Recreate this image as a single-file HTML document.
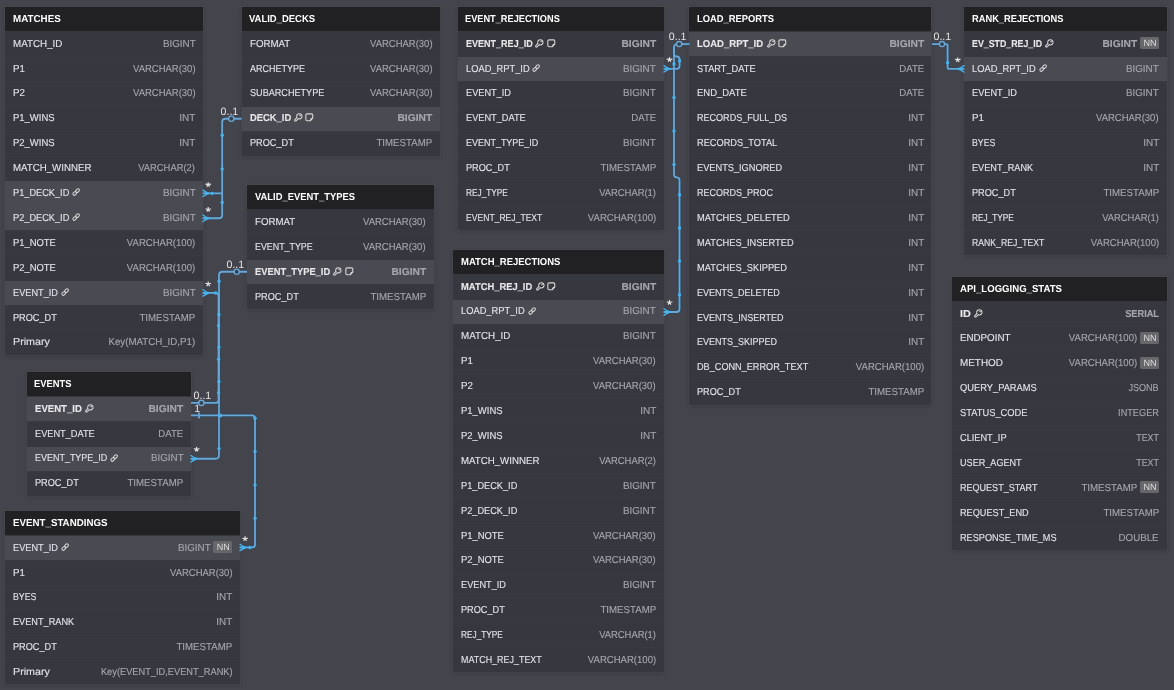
<!DOCTYPE html><html><head><meta charset="utf-8"><style>
*{box-sizing:border-box}
html,body{margin:0;padding:0}
body{width:1174px;height:690px;overflow:hidden;position:relative;background:#44444d;font-family:"Liberation Sans",sans-serif;text-rendering:geometricPrecision}
#w{position:absolute;left:0;top:0;width:1174px;height:690px;will-change:transform}
.t{position:absolute;background:#37373f;box-shadow:0 0 0 1px rgba(255,255,255,0.03),0 1px 4px rgba(0,0,0,0.22)}
.h{position:absolute;left:0;right:0;top:0;height:24.0px;background:#212123}
.r{position:absolute;left:0;right:0;height:24.9px;box-shadow:inset 0 1px 0 #3a3a43}
.r.f{box-shadow:none}
.r.hl{box-shadow:none}
.hlb{position:absolute;left:0;right:0;background:#4a4a52}
.x{position:absolute;top:1.65px;white-space:nowrap;font-size:10.1px;line-height:24.9px}
.hx{position:absolute;top:1px;white-space:nowrap;font-size:10.1px;line-height:24.0px;color:#fff;font-weight:bold;transform-origin:0 50%}
.n{color:#e2e2ea;transform-origin:0 50%;-webkit-text-stroke:0.12px #e2e2ea}
.ty{color:#a6a6ae;transform-origin:100% 50%;-webkit-text-stroke:0.12px #a6a6ae}
.b{font-weight:bold}
.n.b{color:#e8e8e8}
.ic{position:absolute;color:#d8d8d8}
.nn{position:absolute;background:#67676b;border-radius:1.5px}
.nnt{position:absolute;color:#dcdcdc;font-size:9px;white-space:nowrap;transform-origin:0 0}
svg.lines{position:absolute;left:0;top:0}
.lab{position:absolute;color:#e4e4e4;font-size:10.6px;line-height:12px;white-space:nowrap}
</style></head><body><div id="w"><div class="t" style="left:5px;top:7px;width:198.00px;height:347.70px"><div class="h"><span class="hx" style="left:7.5px;transform:scaleX(0.9702)">MATCHES</span></div><div class="r f" style="top:24.00px"><span class="x n" style="left:8.1px;transform:scaleX(0.9713)">MATCH_ID</span><span class="x ty" style="right:7.70px;transform:scaleX(0.9706)">BIGINT</span></div><div class="r" style="top:48.90px"><span class="x n" style="left:8.1px;transform:scaleX(0.9593)">P1</span><span class="x ty" style="right:7.70px;transform:scaleX(0.9397)">VARCHAR(30)</span></div><div class="r" style="top:73.80px"><span class="x n" style="left:8.1px;transform:scaleX(0.9593)">P2</span><span class="x ty" style="right:7.70px;transform:scaleX(0.9397)">VARCHAR(30)</span></div><div class="r" style="top:98.70px"><span class="x n" style="left:8.1px;transform:scaleX(0.9374)">P1_WINS</span><span class="x ty" style="right:7.70px;transform:scaleX(0.9827)">INT</span></div><div class="r" style="top:123.60px"><span class="x n" style="left:8.1px;transform:scaleX(0.9374)">P2_WINS</span><span class="x ty" style="right:7.70px;transform:scaleX(0.9827)">INT</span></div><div class="r" style="top:148.50px"><span class="x n" style="left:8.1px;transform:scaleX(0.9601)">MATCH_WINNER</span><span class="x ty" style="right:7.70px;transform:scaleX(0.9315)">VARCHAR(2)</span></div><div class="hlb" style="top:174.20px;height:24.90px"></div><div class="r hl" style="top:173.40px"><span class="x n" style="left:8.1px;transform:scaleX(0.9123)">P1_DECK_ID</span><span class="ic" style="left:67.43px;top:8.00px"><svg width="9" height="9" viewBox="0 0 9 9" style="display:block;overflow:visible"><g fill="none" stroke="currentColor" stroke-width="1.05"><rect x="-2.05" y="-1.35" width="4.1" height="2.7" rx="1.35" transform="translate(5.55 2.65) rotate(-45)"/><rect x="-2.05" y="-1.35" width="4.1" height="2.7" rx="1.35" transform="translate(2.75 5.45) rotate(-45)"/></g></svg></span><span class="x ty" style="right:7.70px;transform:scaleX(0.9706)">BIGINT</span></div><div class="hlb" style="top:199.10px;height:24.90px"></div><div class="r hl" style="top:198.30px"><span class="x n" style="left:8.1px;transform:scaleX(0.9123)">P2_DECK_ID</span><span class="ic" style="left:67.43px;top:8.00px"><svg width="9" height="9" viewBox="0 0 9 9" style="display:block;overflow:visible"><g fill="none" stroke="currentColor" stroke-width="1.05"><rect x="-2.05" y="-1.35" width="4.1" height="2.7" rx="1.35" transform="translate(5.55 2.65) rotate(-45)"/><rect x="-2.05" y="-1.35" width="4.1" height="2.7" rx="1.35" transform="translate(2.75 5.45) rotate(-45)"/></g></svg></span><span class="x ty" style="right:7.70px;transform:scaleX(0.9706)">BIGINT</span></div><div class="r" style="top:223.20px"><span class="x n" style="left:8.1px;transform:scaleX(0.9323)">P1_NOTE</span><span class="x ty" style="right:7.70px;transform:scaleX(0.9465)">VARCHAR(100)</span></div><div class="r" style="top:248.10px"><span class="x n" style="left:8.1px;transform:scaleX(0.9323)">P2_NOTE</span><span class="x ty" style="right:7.70px;transform:scaleX(0.9465)">VARCHAR(100)</span></div><div class="hlb" style="top:273.80px;height:24.90px"></div><div class="r hl" style="top:273.00px"><span class="x n" style="left:8.1px;transform:scaleX(0.9109)">EVENT_ID</span><span class="ic" style="left:56.09px;top:8.00px"><svg width="9" height="9" viewBox="0 0 9 9" style="display:block;overflow:visible"><g fill="none" stroke="currentColor" stroke-width="1.05"><rect x="-2.05" y="-1.35" width="4.1" height="2.7" rx="1.35" transform="translate(5.55 2.65) rotate(-45)"/><rect x="-2.05" y="-1.35" width="4.1" height="2.7" rx="1.35" transform="translate(2.75 5.45) rotate(-45)"/></g></svg></span><span class="x ty" style="right:7.70px;transform:scaleX(0.9706)">BIGINT</span></div><div class="r" style="top:297.90px"><span class="x n" style="left:8.1px;transform:scaleX(0.9084)">PROC_DT</span><span class="x ty" style="right:7.70px;transform:scaleX(0.9580)">TIMESTAMP</span></div><div class="r" style="top:322.80px"><span class="x n" style="left:8.1px;transform:scaleX(1.0608)">Primary</span><span class="x ty" style="right:7.70px;transform:scaleX(0.9621)">Key(MATCH_ID,P1)</span></div></div><div class="t" style="left:241.5px;top:7px;width:198.50px;height:148.50px"><div class="h"><span class="hx" style="left:7.5px;transform:scaleX(0.9366)">VALID_DECKS</span></div><div class="r f" style="top:24.00px"><span class="x n" style="left:8.1px;transform:scaleX(0.9629)">FORMAT</span><span class="x ty" style="right:7.70px;transform:scaleX(0.9397)">VARCHAR(30)</span></div><div class="r" style="top:48.90px"><span class="x n" style="left:8.1px;transform:scaleX(0.8899)">ARCHETYPE</span><span class="x ty" style="right:7.70px;transform:scaleX(0.9397)">VARCHAR(30)</span></div><div class="r" style="top:73.80px"><span class="x n" style="left:8.1px;transform:scaleX(0.9014)">SUBARCHETYPE</span><span class="x ty" style="right:7.70px;transform:scaleX(0.9397)">VARCHAR(30)</span></div><div class="hlb" style="top:99.50px;height:24.90px"></div><div class="r hl" style="top:98.70px"><span class="x n b" style="left:8.1px;transform:scaleX(0.9304)">DECK_ID</span><span class="ic" style="left:52.35px;top:7.70px"><svg width="9" height="9" viewBox="0 0 9 9" style="display:block;overflow:visible"><defs><mask id="km1" maskUnits="userSpaceOnUse" x="-2" y="-2" width="13" height="13"><g fill="#fff" stroke="#fff" stroke-width="2.1" stroke-linejoin="round"><circle cx="5.35" cy="3.35" r="2.1"/><rect x="0" y="-0.35" width="5.9" height="0.7" rx="0.35" transform="translate(5.4 3.3) rotate(135)"/></g><g fill="#000"><circle cx="5.35" cy="3.35" r="2.1"/><rect x="0" y="-0.35" width="5.9" height="0.7" rx="0.35" transform="translate(5.4 3.3) rotate(135)"/></g></mask></defs><rect x="-2" y="-2" width="13" height="13" fill="currentColor" mask="url(#km1)"/><circle cx="6.1" cy="2.6" r="0.8" fill="currentColor"/></svg></span><span class="ic" style="left:63.55px;top:7.75px"><svg width="9" height="9" viewBox="0 0 9 9" style="display:block;overflow:visible"><g fill="none" stroke="currentColor" stroke-width="1.1"><path d="M2.05 0.85 H6.55 A1.2 1.2 0 0 1 7.75 2.05 V5.1 L5.35 7.75 H2.05 A1.2 1.2 0 0 1 0.85 6.55 V2.05 A1.2 1.2 0 0 1 2.05 0.85 Z"/><path d="M7.7 5.15 Q5.7 5.3 5.4 7.7"/></g></svg></span><span class="x ty b" style="right:7.70px;transform:scaleX(1.0182)">BIGINT</span></div><div class="r" style="top:123.60px"><span class="x n" style="left:8.1px;transform:scaleX(0.9084)">PROC_DT</span><span class="x ty" style="right:7.70px;transform:scaleX(0.9580)">TIMESTAMP</span></div></div><div class="t" style="left:247px;top:185.2px;width:186.70px;height:123.60px"><div class="h"><span class="hx" style="left:7.5px;transform:scaleX(0.9297)">VALID_EVENT_TYPES</span></div><div class="r f" style="top:24.00px"><span class="x n" style="left:8.1px;transform:scaleX(0.9629)">FORMAT</span><span class="x ty" style="right:7.70px;transform:scaleX(0.9397)">VARCHAR(30)</span></div><div class="r" style="top:48.90px"><span class="x n" style="left:8.1px;transform:scaleX(0.8792)">EVENT_TYPE</span><span class="x ty" style="right:7.70px;transform:scaleX(0.9397)">VARCHAR(30)</span></div><div class="hlb" style="top:74.60px;height:24.90px"></div><div class="r hl" style="top:73.80px"><span class="x n b" style="left:8.1px;transform:scaleX(0.9241)">EVENT_TYPE_ID</span><span class="ic" style="left:86.31px;top:7.70px"><svg width="9" height="9" viewBox="0 0 9 9" style="display:block;overflow:visible"><defs><mask id="km2" maskUnits="userSpaceOnUse" x="-2" y="-2" width="13" height="13"><g fill="#fff" stroke="#fff" stroke-width="2.1" stroke-linejoin="round"><circle cx="5.35" cy="3.35" r="2.1"/><rect x="0" y="-0.35" width="5.9" height="0.7" rx="0.35" transform="translate(5.4 3.3) rotate(135)"/></g><g fill="#000"><circle cx="5.35" cy="3.35" r="2.1"/><rect x="0" y="-0.35" width="5.9" height="0.7" rx="0.35" transform="translate(5.4 3.3) rotate(135)"/></g></mask></defs><rect x="-2" y="-2" width="13" height="13" fill="currentColor" mask="url(#km2)"/><circle cx="6.1" cy="2.6" r="0.8" fill="currentColor"/></svg></span><span class="ic" style="left:97.51px;top:7.75px"><svg width="9" height="9" viewBox="0 0 9 9" style="display:block;overflow:visible"><g fill="none" stroke="currentColor" stroke-width="1.1"><path d="M2.05 0.85 H6.55 A1.2 1.2 0 0 1 7.75 2.05 V5.1 L5.35 7.75 H2.05 A1.2 1.2 0 0 1 0.85 6.55 V2.05 A1.2 1.2 0 0 1 2.05 0.85 Z"/><path d="M7.7 5.15 Q5.7 5.3 5.4 7.7"/></g></svg></span><span class="x ty b" style="right:7.70px;transform:scaleX(1.0182)">BIGINT</span></div><div class="r" style="top:98.70px"><span class="x n" style="left:8.1px;transform:scaleX(0.9084)">PROC_DT</span><span class="x ty" style="right:7.70px;transform:scaleX(0.9580)">TIMESTAMP</span></div></div><div class="t" style="left:26.6px;top:372.0px;width:164.70px;height:123.60px"><div class="h"><span class="hx" style="left:7.5px;transform:scaleX(0.9280)">EVENTS</span></div><div class="hlb" style="top:24.80px;height:24.90px"></div><div class="r f hl" style="top:24.00px"><span class="x n b" style="left:8.1px;transform:scaleX(0.9498)">EVENT_ID</span><span class="ic" style="left:58.01px;top:7.70px"><svg width="9" height="9" viewBox="0 0 9 9" style="display:block;overflow:visible"><defs><mask id="km3" maskUnits="userSpaceOnUse" x="-2" y="-2" width="13" height="13"><g fill="#fff" stroke="#fff" stroke-width="2.1" stroke-linejoin="round"><circle cx="5.35" cy="3.35" r="2.1"/><rect x="0" y="-0.35" width="5.9" height="0.7" rx="0.35" transform="translate(5.4 3.3) rotate(135)"/></g><g fill="#000"><circle cx="5.35" cy="3.35" r="2.1"/><rect x="0" y="-0.35" width="5.9" height="0.7" rx="0.35" transform="translate(5.4 3.3) rotate(135)"/></g></mask></defs><rect x="-2" y="-2" width="13" height="13" fill="currentColor" mask="url(#km3)"/><circle cx="6.1" cy="2.6" r="0.8" fill="currentColor"/></svg></span><span class="x ty b" style="right:7.70px;transform:scaleX(1.0182)">BIGINT</span></div><div class="r" style="top:48.90px"><span class="x n" style="left:8.1px;transform:scaleX(0.9122)">EVENT_DATE</span><span class="x ty" style="right:7.70px;transform:scaleX(0.9505)">DATE</span></div><div class="hlb" style="top:74.60px;height:24.90px"></div><div class="r hl" style="top:73.80px"><span class="x n" style="left:8.1px;transform:scaleX(0.8884)">EVENT_TYPE_ID</span><span class="ic" style="left:83.41px;top:8.00px"><svg width="9" height="9" viewBox="0 0 9 9" style="display:block;overflow:visible"><g fill="none" stroke="currentColor" stroke-width="1.05"><rect x="-2.05" y="-1.35" width="4.1" height="2.7" rx="1.35" transform="translate(5.55 2.65) rotate(-45)"/><rect x="-2.05" y="-1.35" width="4.1" height="2.7" rx="1.35" transform="translate(2.75 5.45) rotate(-45)"/></g></svg></span><span class="x ty" style="right:7.70px;transform:scaleX(0.9706)">BIGINT</span></div><div class="r" style="top:98.70px"><span class="x n" style="left:8.1px;transform:scaleX(0.9084)">PROC_DT</span><span class="x ty" style="right:7.70px;transform:scaleX(0.9580)">TIMESTAMP</span></div></div><div class="t" style="left:5px;top:511px;width:234.90px;height:173.40px"><div class="h"><span class="hx" style="left:7.5px;transform:scaleX(0.9650)">EVENT_STANDINGS</span></div><div class="hlb" style="top:24.80px;height:24.90px"></div><div class="r f hl" style="top:24.00px"><span class="x n" style="left:8.1px;transform:scaleX(0.9109)">EVENT_ID</span><span class="ic" style="left:56.09px;top:8.00px"><svg width="9" height="9" viewBox="0 0 9 9" style="display:block;overflow:visible"><g fill="none" stroke="currentColor" stroke-width="1.05"><rect x="-2.05" y="-1.35" width="4.1" height="2.7" rx="1.35" transform="translate(5.55 2.65) rotate(-45)"/><rect x="-2.05" y="-1.35" width="4.1" height="2.7" rx="1.35" transform="translate(2.75 5.45) rotate(-45)"/></g></svg></span><span class="nn" style="right:7.75px;top:6.05px;width:19px;height:12px"></span><span class="nnt" style="left:211.70px;top:8.15px;line-height:9px">NN</span><span class="x ty" style="right:29.20px;transform:scaleX(0.9706)">BIGINT</span></div><div class="r" style="top:48.90px"><span class="x n" style="left:8.1px;transform:scaleX(0.9593)">P1</span><span class="x ty" style="right:7.70px;transform:scaleX(0.9397)">VARCHAR(30)</span></div><div class="r" style="top:73.80px"><span class="x n" style="left:8.1px;transform:scaleX(0.8655)">BYES</span><span class="x ty" style="right:7.70px;transform:scaleX(0.9827)">INT</span></div><div class="r" style="top:98.70px"><span class="x n" style="left:8.1px;transform:scaleX(0.9093)">EVENT_RANK</span><span class="x ty" style="right:7.70px;transform:scaleX(0.9827)">INT</span></div><div class="r" style="top:123.60px"><span class="x n" style="left:8.1px;transform:scaleX(0.9084)">PROC_DT</span><span class="x ty" style="right:7.70px;transform:scaleX(0.9580)">TIMESTAMP</span></div><div class="r" style="top:148.50px"><span class="x n" style="left:8.1px;transform:scaleX(1.0608)">Primary</span><span class="x ty" style="right:7.70px;transform:scaleX(0.9168)">Key(EVENT_ID,EVENT_RANK)</span></div></div><div class="t" style="left:457.6px;top:7px;width:206.20px;height:223.20px"><div class="h"><span class="hx" style="left:7.5px;transform:scaleX(0.9136)">EVENT_REJECTIONS</span></div><div class="r f" style="top:24.00px"><span class="x n b" style="left:8.1px;transform:scaleX(0.8938)">EVENT_REJ_ID</span><span class="ic" style="left:77.83px;top:7.70px"><svg width="9" height="9" viewBox="0 0 9 9" style="display:block;overflow:visible"><defs><mask id="km4" maskUnits="userSpaceOnUse" x="-2" y="-2" width="13" height="13"><g fill="#fff" stroke="#fff" stroke-width="2.1" stroke-linejoin="round"><circle cx="5.35" cy="3.35" r="2.1"/><rect x="0" y="-0.35" width="5.9" height="0.7" rx="0.35" transform="translate(5.4 3.3) rotate(135)"/></g><g fill="#000"><circle cx="5.35" cy="3.35" r="2.1"/><rect x="0" y="-0.35" width="5.9" height="0.7" rx="0.35" transform="translate(5.4 3.3) rotate(135)"/></g></mask></defs><rect x="-2" y="-2" width="13" height="13" fill="currentColor" mask="url(#km4)"/><circle cx="6.1" cy="2.6" r="0.8" fill="currentColor"/></svg></span><span class="ic" style="left:89.03px;top:7.75px"><svg width="9" height="9" viewBox="0 0 9 9" style="display:block;overflow:visible"><g fill="none" stroke="currentColor" stroke-width="1.1"><path d="M2.05 0.85 H6.55 A1.2 1.2 0 0 1 7.75 2.05 V5.1 L5.35 7.75 H2.05 A1.2 1.2 0 0 1 0.85 6.55 V2.05 A1.2 1.2 0 0 1 2.05 0.85 Z"/><path d="M7.7 5.15 Q5.7 5.3 5.4 7.7"/></g></svg></span><span class="x ty b" style="right:7.70px;transform:scaleX(1.0182)">BIGINT</span></div><div class="hlb" style="top:49.70px;height:24.90px"></div><div class="r hl" style="top:48.90px"><span class="x n" style="left:8.1px;transform:scaleX(0.9229)">LOAD_RPT_ID</span><span class="ic" style="left:74.81px;top:8.00px"><svg width="9" height="9" viewBox="0 0 9 9" style="display:block;overflow:visible"><g fill="none" stroke="currentColor" stroke-width="1.05"><rect x="-2.05" y="-1.35" width="4.1" height="2.7" rx="1.35" transform="translate(5.55 2.65) rotate(-45)"/><rect x="-2.05" y="-1.35" width="4.1" height="2.7" rx="1.35" transform="translate(2.75 5.45) rotate(-45)"/></g></svg></span><span class="x ty" style="right:7.70px;transform:scaleX(0.9706)">BIGINT</span></div><div class="r" style="top:73.80px"><span class="x n" style="left:8.1px;transform:scaleX(0.9109)">EVENT_ID</span><span class="x ty" style="right:7.70px;transform:scaleX(0.9706)">BIGINT</span></div><div class="r" style="top:98.70px"><span class="x n" style="left:8.1px;transform:scaleX(0.9122)">EVENT_DATE</span><span class="x ty" style="right:7.70px;transform:scaleX(0.9505)">DATE</span></div><div class="r" style="top:123.60px"><span class="x n" style="left:8.1px;transform:scaleX(0.8884)">EVENT_TYPE_ID</span><span class="x ty" style="right:7.70px;transform:scaleX(0.9706)">BIGINT</span></div><div class="r" style="top:148.50px"><span class="x n" style="left:8.1px;transform:scaleX(0.9084)">PROC_DT</span><span class="x ty" style="right:7.70px;transform:scaleX(0.9580)">TIMESTAMP</span></div><div class="r" style="top:173.40px"><span class="x n" style="left:8.1px;transform:scaleX(0.8199)">REJ_TYPE</span><span class="x ty" style="right:7.70px;transform:scaleX(0.9315)">VARCHAR(1)</span></div><div class="r" style="top:198.30px"><span class="x n" style="left:8.1px;transform:scaleX(0.8507)">EVENT_REJ_TEXT</span><span class="x ty" style="right:7.70px;transform:scaleX(0.9465)">VARCHAR(100)</span></div></div><div class="t" style="left:453.3px;top:249.95px;width:210.40px;height:422.40px"><div class="h"><span class="hx" style="left:7.5px;transform:scaleX(0.9391)">MATCH_REJECTIONS</span></div><div class="r f" style="top:24.00px"><span class="x n b" style="left:8.1px;transform:scaleX(0.9296)">MATCH_REJ_ID</span><span class="ic" style="left:82.40px;top:7.70px"><svg width="9" height="9" viewBox="0 0 9 9" style="display:block;overflow:visible"><defs><mask id="km5" maskUnits="userSpaceOnUse" x="-2" y="-2" width="13" height="13"><g fill="#fff" stroke="#fff" stroke-width="2.1" stroke-linejoin="round"><circle cx="5.35" cy="3.35" r="2.1"/><rect x="0" y="-0.35" width="5.9" height="0.7" rx="0.35" transform="translate(5.4 3.3) rotate(135)"/></g><g fill="#000"><circle cx="5.35" cy="3.35" r="2.1"/><rect x="0" y="-0.35" width="5.9" height="0.7" rx="0.35" transform="translate(5.4 3.3) rotate(135)"/></g></mask></defs><rect x="-2" y="-2" width="13" height="13" fill="currentColor" mask="url(#km5)"/><circle cx="6.1" cy="2.6" r="0.8" fill="currentColor"/></svg></span><span class="ic" style="left:93.60px;top:7.75px"><svg width="9" height="9" viewBox="0 0 9 9" style="display:block;overflow:visible"><g fill="none" stroke="currentColor" stroke-width="1.1"><path d="M2.05 0.85 H6.55 A1.2 1.2 0 0 1 7.75 2.05 V5.1 L5.35 7.75 H2.05 A1.2 1.2 0 0 1 0.85 6.55 V2.05 A1.2 1.2 0 0 1 2.05 0.85 Z"/><path d="M7.7 5.15 Q5.7 5.3 5.4 7.7"/></g></svg></span><span class="x ty b" style="right:7.70px;transform:scaleX(1.0182)">BIGINT</span></div><div class="hlb" style="top:49.70px;height:24.90px"></div><div class="r hl" style="top:48.90px"><span class="x n" style="left:8.1px;transform:scaleX(0.9229)">LOAD_RPT_ID</span><span class="ic" style="left:74.81px;top:8.00px"><svg width="9" height="9" viewBox="0 0 9 9" style="display:block;overflow:visible"><g fill="none" stroke="currentColor" stroke-width="1.05"><rect x="-2.05" y="-1.35" width="4.1" height="2.7" rx="1.35" transform="translate(5.55 2.65) rotate(-45)"/><rect x="-2.05" y="-1.35" width="4.1" height="2.7" rx="1.35" transform="translate(2.75 5.45) rotate(-45)"/></g></svg></span><span class="x ty" style="right:7.70px;transform:scaleX(0.9706)">BIGINT</span></div><div class="r" style="top:73.80px"><span class="x n" style="left:8.1px;transform:scaleX(0.9713)">MATCH_ID</span><span class="x ty" style="right:7.70px;transform:scaleX(0.9706)">BIGINT</span></div><div class="r" style="top:98.70px"><span class="x n" style="left:8.1px;transform:scaleX(0.9593)">P1</span><span class="x ty" style="right:7.70px;transform:scaleX(0.9397)">VARCHAR(30)</span></div><div class="r" style="top:123.60px"><span class="x n" style="left:8.1px;transform:scaleX(0.9593)">P2</span><span class="x ty" style="right:7.70px;transform:scaleX(0.9397)">VARCHAR(30)</span></div><div class="r" style="top:148.50px"><span class="x n" style="left:8.1px;transform:scaleX(0.9374)">P1_WINS</span><span class="x ty" style="right:7.70px;transform:scaleX(0.9827)">INT</span></div><div class="r" style="top:173.40px"><span class="x n" style="left:8.1px;transform:scaleX(0.9374)">P2_WINS</span><span class="x ty" style="right:7.70px;transform:scaleX(0.9827)">INT</span></div><div class="r" style="top:198.30px"><span class="x n" style="left:8.1px;transform:scaleX(0.9601)">MATCH_WINNER</span><span class="x ty" style="right:7.70px;transform:scaleX(0.9315)">VARCHAR(2)</span></div><div class="r" style="top:223.20px"><span class="x n" style="left:8.1px;transform:scaleX(0.9123)">P1_DECK_ID</span><span class="x ty" style="right:7.70px;transform:scaleX(0.9706)">BIGINT</span></div><div class="r" style="top:248.10px"><span class="x n" style="left:8.1px;transform:scaleX(0.9123)">P2_DECK_ID</span><span class="x ty" style="right:7.70px;transform:scaleX(0.9706)">BIGINT</span></div><div class="r" style="top:273.00px"><span class="x n" style="left:8.1px;transform:scaleX(0.9323)">P1_NOTE</span><span class="x ty" style="right:7.70px;transform:scaleX(0.9397)">VARCHAR(30)</span></div><div class="r" style="top:297.90px"><span class="x n" style="left:8.1px;transform:scaleX(0.9323)">P2_NOTE</span><span class="x ty" style="right:7.70px;transform:scaleX(0.9397)">VARCHAR(30)</span></div><div class="r" style="top:322.80px"><span class="x n" style="left:8.1px;transform:scaleX(0.9109)">EVENT_ID</span><span class="x ty" style="right:7.70px;transform:scaleX(0.9706)">BIGINT</span></div><div class="r" style="top:347.70px"><span class="x n" style="left:8.1px;transform:scaleX(0.9084)">PROC_DT</span><span class="x ty" style="right:7.70px;transform:scaleX(0.9580)">TIMESTAMP</span></div><div class="r" style="top:372.60px"><span class="x n" style="left:8.1px;transform:scaleX(0.8199)">REJ_TYPE</span><span class="x ty" style="right:7.70px;transform:scaleX(0.9315)">VARCHAR(1)</span></div><div class="r" style="top:397.50px"><span class="x n" style="left:8.1px;transform:scaleX(0.8854)">MATCH_REJ_TEXT</span><span class="x ty" style="right:7.70px;transform:scaleX(0.9465)">VARCHAR(100)</span></div></div><div class="t" style="left:689.4px;top:7px;width:242.10px;height:397.50px"><div class="h"><span class="hx" style="left:7.5px;transform:scaleX(0.9286)">LOAD_REPORTS</span></div><div class="hlb" style="top:24.80px;height:24.90px"></div><div class="r f hl" style="top:24.00px"><span class="x n b" style="left:8.1px;transform:scaleX(0.9434)">LOAD_RPT_ID</span><span class="ic" style="left:77.27px;top:7.70px"><svg width="9" height="9" viewBox="0 0 9 9" style="display:block;overflow:visible"><defs><mask id="km6" maskUnits="userSpaceOnUse" x="-2" y="-2" width="13" height="13"><g fill="#fff" stroke="#fff" stroke-width="2.1" stroke-linejoin="round"><circle cx="5.35" cy="3.35" r="2.1"/><rect x="0" y="-0.35" width="5.9" height="0.7" rx="0.35" transform="translate(5.4 3.3) rotate(135)"/></g><g fill="#000"><circle cx="5.35" cy="3.35" r="2.1"/><rect x="0" y="-0.35" width="5.9" height="0.7" rx="0.35" transform="translate(5.4 3.3) rotate(135)"/></g></mask></defs><rect x="-2" y="-2" width="13" height="13" fill="currentColor" mask="url(#km6)"/><circle cx="6.1" cy="2.6" r="0.8" fill="currentColor"/></svg></span><span class="ic" style="left:88.47px;top:7.75px"><svg width="9" height="9" viewBox="0 0 9 9" style="display:block;overflow:visible"><g fill="none" stroke="currentColor" stroke-width="1.1"><path d="M2.05 0.85 H6.55 A1.2 1.2 0 0 1 7.75 2.05 V5.1 L5.35 7.75 H2.05 A1.2 1.2 0 0 1 0.85 6.55 V2.05 A1.2 1.2 0 0 1 2.05 0.85 Z"/><path d="M7.7 5.15 Q5.7 5.3 5.4 7.7"/></g></svg></span><span class="x ty b" style="right:7.70px;transform:scaleX(1.0182)">BIGINT</span></div><div class="r" style="top:48.90px"><span class="x n" style="left:8.1px;transform:scaleX(0.9159)">START_DATE</span><span class="x ty" style="right:7.70px;transform:scaleX(0.9505)">DATE</span></div><div class="r" style="top:73.80px"><span class="x n" style="left:8.1px;transform:scaleX(0.9385)">END_DATE</span><span class="x ty" style="right:7.70px;transform:scaleX(0.9505)">DATE</span></div><div class="r" style="top:98.70px"><span class="x n" style="left:8.1px;transform:scaleX(0.8958)">RECORDS_FULL_DS</span><span class="x ty" style="right:7.70px;transform:scaleX(0.9827)">INT</span></div><div class="r" style="top:123.60px"><span class="x n" style="left:8.1px;transform:scaleX(0.9144)">RECORDS_TOTAL</span><span class="x ty" style="right:7.70px;transform:scaleX(0.9827)">INT</span></div><div class="r" style="top:148.50px"><span class="x n" style="left:8.1px;transform:scaleX(0.9142)">EVENTS_IGNORED</span><span class="x ty" style="right:7.70px;transform:scaleX(0.9827)">INT</span></div><div class="r" style="top:173.40px"><span class="x n" style="left:8.1px;transform:scaleX(0.8923)">RECORDS_PROC</span><span class="x ty" style="right:7.70px;transform:scaleX(0.9827)">INT</span></div><div class="r" style="top:198.30px"><span class="x n" style="left:8.1px;transform:scaleX(0.9198)">MATCHES_DELETED</span><span class="x ty" style="right:7.70px;transform:scaleX(0.9827)">INT</span></div><div class="r" style="top:223.20px"><span class="x n" style="left:8.1px;transform:scaleX(0.9201)">MATCHES_INSERTED</span><span class="x ty" style="right:7.70px;transform:scaleX(0.9827)">INT</span></div><div class="r" style="top:248.10px"><span class="x n" style="left:8.1px;transform:scaleX(0.9186)">MATCHES_SKIPPED</span><span class="x ty" style="right:7.70px;transform:scaleX(0.9827)">INT</span></div><div class="r" style="top:273.00px"><span class="x n" style="left:8.1px;transform:scaleX(0.8930)">EVENTS_DELETED</span><span class="x ty" style="right:7.70px;transform:scaleX(0.9827)">INT</span></div><div class="r" style="top:297.90px"><span class="x n" style="left:8.1px;transform:scaleX(0.8945)">EVENTS_INSERTED</span><span class="x ty" style="right:7.70px;transform:scaleX(0.9827)">INT</span></div><div class="r" style="top:322.80px"><span class="x n" style="left:8.1px;transform:scaleX(0.8909)">EVENTS_SKIPPED</span><span class="x ty" style="right:7.70px;transform:scaleX(0.9827)">INT</span></div><div class="r" style="top:347.70px"><span class="x n" style="left:8.1px;transform:scaleX(0.9055)">DB_CONN_ERROR_TEXT</span><span class="x ty" style="right:7.70px;transform:scaleX(0.9465)">VARCHAR(100)</span></div><div class="r" style="top:372.60px"><span class="x n" style="left:8.1px;transform:scaleX(0.9084)">PROC_DT</span><span class="x ty" style="right:7.70px;transform:scaleX(0.9580)">TIMESTAMP</span></div></div><div class="t" style="left:964px;top:7px;width:202.60px;height:248.10px"><div class="h"><span class="hx" style="left:7.5px;transform:scaleX(0.9209)">RANK_REJECTIONS</span></div><div class="r f" style="top:24.00px"><span class="x n b" style="left:8.1px;transform:scaleX(0.8727)">EV_STD_REJ_ID</span><span class="ic" style="left:81.15px;top:7.70px"><svg width="9" height="9" viewBox="0 0 9 9" style="display:block;overflow:visible"><defs><mask id="km7" maskUnits="userSpaceOnUse" x="-2" y="-2" width="13" height="13"><g fill="#fff" stroke="#fff" stroke-width="2.1" stroke-linejoin="round"><circle cx="5.35" cy="3.35" r="2.1"/><rect x="0" y="-0.35" width="5.9" height="0.7" rx="0.35" transform="translate(5.4 3.3) rotate(135)"/></g><g fill="#000"><circle cx="5.35" cy="3.35" r="2.1"/><rect x="0" y="-0.35" width="5.9" height="0.7" rx="0.35" transform="translate(5.4 3.3) rotate(135)"/></g></mask></defs><rect x="-2" y="-2" width="13" height="13" fill="currentColor" mask="url(#km7)"/><circle cx="6.1" cy="2.6" r="0.8" fill="currentColor"/></svg></span><span class="nn" style="right:7.75px;top:6.05px;width:19px;height:12px"></span><span class="nnt" style="left:179.40px;top:8.15px;line-height:9px">NN</span><span class="x ty b" style="right:29.20px;transform:scaleX(1.0182)">BIGINT</span></div><div class="hlb" style="top:49.70px;height:24.90px"></div><div class="r hl" style="top:48.90px"><span class="x n" style="left:8.1px;transform:scaleX(0.9229)">LOAD_RPT_ID</span><span class="ic" style="left:74.81px;top:8.00px"><svg width="9" height="9" viewBox="0 0 9 9" style="display:block;overflow:visible"><g fill="none" stroke="currentColor" stroke-width="1.05"><rect x="-2.05" y="-1.35" width="4.1" height="2.7" rx="1.35" transform="translate(5.55 2.65) rotate(-45)"/><rect x="-2.05" y="-1.35" width="4.1" height="2.7" rx="1.35" transform="translate(2.75 5.45) rotate(-45)"/></g></svg></span><span class="x ty" style="right:7.70px;transform:scaleX(0.9706)">BIGINT</span></div><div class="r" style="top:73.80px"><span class="x n" style="left:8.1px;transform:scaleX(0.9109)">EVENT_ID</span><span class="x ty" style="right:7.70px;transform:scaleX(0.9706)">BIGINT</span></div><div class="r" style="top:98.70px"><span class="x n" style="left:8.1px;transform:scaleX(0.9593)">P1</span><span class="x ty" style="right:7.70px;transform:scaleX(0.9397)">VARCHAR(30)</span></div><div class="r" style="top:123.60px"><span class="x n" style="left:8.1px;transform:scaleX(0.8655)">BYES</span><span class="x ty" style="right:7.70px;transform:scaleX(0.9827)">INT</span></div><div class="r" style="top:148.50px"><span class="x n" style="left:8.1px;transform:scaleX(0.9093)">EVENT_RANK</span><span class="x ty" style="right:7.70px;transform:scaleX(0.9827)">INT</span></div><div class="r" style="top:173.40px"><span class="x n" style="left:8.1px;transform:scaleX(0.9084)">PROC_DT</span><span class="x ty" style="right:7.70px;transform:scaleX(0.9580)">TIMESTAMP</span></div><div class="r" style="top:198.30px"><span class="x n" style="left:8.1px;transform:scaleX(0.8199)">REJ_TYPE</span><span class="x ty" style="right:7.70px;transform:scaleX(0.9315)">VARCHAR(1)</span></div><div class="r" style="top:223.20px"><span class="x n" style="left:8.1px;transform:scaleX(0.8598)">RANK_REJ_TEXT</span><span class="x ty" style="right:7.70px;transform:scaleX(0.9465)">VARCHAR(100)</span></div></div><div class="t" style="left:952px;top:276.9px;width:214.60px;height:273.00px"><div class="h"><span class="hx" style="left:7.5px;transform:scaleX(0.9499)">API_LOGGING_STATS</span></div><div class="r f" style="top:24.00px"><span class="x n b" style="left:8.1px;transform:scaleX(1.0714)">ID</span><span class="ic" style="left:21.92px;top:7.70px"><svg width="9" height="9" viewBox="0 0 9 9" style="display:block;overflow:visible"><defs><mask id="km8" maskUnits="userSpaceOnUse" x="-2" y="-2" width="13" height="13"><g fill="#fff" stroke="#fff" stroke-width="2.1" stroke-linejoin="round"><circle cx="5.35" cy="3.35" r="2.1"/><rect x="0" y="-0.35" width="5.9" height="0.7" rx="0.35" transform="translate(5.4 3.3) rotate(135)"/></g><g fill="#000"><circle cx="5.35" cy="3.35" r="2.1"/><rect x="0" y="-0.35" width="5.9" height="0.7" rx="0.35" transform="translate(5.4 3.3) rotate(135)"/></g></mask></defs><rect x="-2" y="-2" width="13" height="13" fill="currentColor" mask="url(#km8)"/><circle cx="6.1" cy="2.6" r="0.8" fill="currentColor"/></svg></span><span class="x ty b" style="right:7.70px;transform:scaleX(0.9155)">SERIAL</span></div><div class="r" style="top:48.90px"><span class="x n" style="left:8.1px;transform:scaleX(0.9670)">ENDPOINT</span><span class="nn" style="right:7.75px;top:6.05px;width:19px;height:12px"></span><span class="nnt" style="left:191.40px;top:8.15px;line-height:9px">NN</span><span class="x ty" style="right:29.20px;transform:scaleX(0.9465)">VARCHAR(100)</span></div><div class="r" style="top:73.80px"><span class="x n" style="left:8.1px;transform:scaleX(0.9801)">METHOD</span><span class="nn" style="right:7.75px;top:6.05px;width:19px;height:12px"></span><span class="nnt" style="left:191.40px;top:8.15px;line-height:9px">NN</span><span class="x ty" style="right:29.20px;transform:scaleX(0.9465)">VARCHAR(100)</span></div><div class="r" style="top:98.70px"><span class="x n" style="left:8.1px;transform:scaleX(0.9229)">QUERY_PARAMS</span><span class="x ty" style="right:7.70px;transform:scaleX(0.8979)">JSONB</span></div><div class="r" style="top:123.60px"><span class="x n" style="left:8.1px;transform:scaleX(0.9233)">STATUS_CODE</span><span class="x ty" style="right:7.70px;transform:scaleX(0.9086)">INTEGER</span></div><div class="r" style="top:148.50px"><span class="x n" style="left:8.1px;transform:scaleX(0.9115)">CLIENT_IP</span><span class="x ty" style="right:7.70px;transform:scaleX(0.8745)">TEXT</span></div><div class="r" style="top:173.40px"><span class="x n" style="left:8.1px;transform:scaleX(0.9008)">USER_AGENT</span><span class="x ty" style="right:7.70px;transform:scaleX(0.8745)">TEXT</span></div><div class="r" style="top:198.30px"><span class="x n" style="left:8.1px;transform:scaleX(0.8946)">REQUEST_START</span><span class="nn" style="right:7.75px;top:6.05px;width:19px;height:12px"></span><span class="nnt" style="left:191.40px;top:8.15px;line-height:9px">NN</span><span class="x ty" style="right:29.20px;transform:scaleX(0.9580)">TIMESTAMP</span></div><div class="r" style="top:223.20px"><span class="x n" style="left:8.1px;transform:scaleX(0.9074)">REQUEST_END</span><span class="x ty" style="right:7.70px;transform:scaleX(0.9580)">TIMESTAMP</span></div><div class="r" style="top:248.10px"><span class="x n" style="left:8.1px;transform:scaleX(0.9061)">RESPONSE_TIME_MS</span><span class="x ty" style="right:7.70px;transform:scaleX(0.9620)">DOUBLE</span></div></div><svg class="lines" width="1174" height="690" viewBox="0 0 1174 690"><g fill="none" stroke="#234a66" stroke-opacity="0.75" stroke-width="3.2" stroke-linecap="butt"><path d="M241.50 118.75 L225.20 118.75 Q222.20 118.75 222.20 121.75 L222.20 215.25 Q222.20 218.25 219.20 218.25 L203.00 218.25"/><path d="M222.20 193.35 L203.00 193.35"/><path d="M247.00 271.75 L222.50 271.75 Q219.00 271.75 219.00 275.25 L219.00 455.25 Q219.00 458.75 215.50 458.75 L191.00 458.75"/><path d="M191.00 402.90 L215.50 402.90 Q218.50 402.90 218.50 399.90 L218.50 295.95 Q218.50 292.95 215.50 292.95 L203.00 292.95"/><path d="M191.00 415.40 L252.00 415.40 Q255.00 415.40 255.00 418.40 L255.00 544.45 Q255.00 547.45 252.00 547.45 L240.00 547.45"/><path d="M689.50 44.05 L677.00 44.05 Q674.00 44.05 674.00 47.05 L674.00 53.70 Q674.00 56.50 676.80 56.50 L676.80 56.50 Q679.60 56.50 679.60 59.30 L679.60 65.85 Q679.60 68.85 676.60 68.85 L664.00 68.85"/><path d="M674.00 47.05 L674.00 174.55 Q674.00 177.30 676.75 177.30 L676.75 177.30 Q679.50 177.30 679.50 180.05 L679.50 309.00 Q679.50 312.00 676.50 312.00 L664.00 312.00"/><path d="M932.00 44.05 L946.60 44.05 Q947.60 44.05 947.60 45.05 L947.60 67.85 Q947.60 68.85 948.60 68.85 L964.00 68.85"/></g><g fill="none" stroke="#6ca6d4" stroke-width="1.8" stroke-linecap="butt"><path d="M241.50 118.75 L225.20 118.75 Q222.20 118.75 222.20 121.75 L222.20 215.25 Q222.20 218.25 219.20 218.25 L203.00 218.25"/><path d="M222.20 193.35 L203.00 193.35"/><path d="M247.00 271.75 L222.50 271.75 Q219.00 271.75 219.00 275.25 L219.00 455.25 Q219.00 458.75 215.50 458.75 L191.00 458.75"/><path d="M191.00 402.90 L215.50 402.90 Q218.50 402.90 218.50 399.90 L218.50 295.95 Q218.50 292.95 215.50 292.95 L203.00 292.95"/><path d="M191.00 415.40 L252.00 415.40 Q255.00 415.40 255.00 418.40 L255.00 544.45 Q255.00 547.45 252.00 547.45 L240.00 547.45"/><path d="M689.50 44.05 L677.00 44.05 Q674.00 44.05 674.00 47.05 L674.00 53.70 Q674.00 56.50 676.80 56.50 L676.80 56.50 Q679.60 56.50 679.60 59.30 L679.60 65.85 Q679.60 68.85 676.60 68.85 L664.00 68.85"/><path d="M674.00 47.05 L674.00 174.55 Q674.00 177.30 676.75 177.30 L676.75 177.30 Q679.50 177.30 679.50 180.05 L679.50 309.00 Q679.50 312.00 676.50 312.00 L664.00 312.00"/><path d="M932.00 44.05 L946.60 44.05 Q947.60 44.05 947.60 45.05 L947.60 67.85 Q947.60 68.85 948.60 68.85 L964.00 68.85"/><path d="M199 412.4 V418.4"/></g><g fill="none" stroke="#4ab2ea" stroke-width="1.4" stroke-linecap="round"><path d="M209.30 193.34999999999997 Q205.84 192.55 203 190.14999999999998 M209.30 193.34999999999997 L203 193.34999999999997 M209.30 193.34999999999997 Q205.84 194.15 203 196.54999999999995"/><path d="M209.30 218.24999999999997 Q205.84 217.45 203 215.04999999999998 M209.30 218.24999999999997 L203 218.24999999999997 M209.30 218.24999999999997 Q205.84 219.05 203 221.44999999999996"/><path d="M197.30 458.75 Q193.84 457.95 191 455.55 M197.30 458.75 L191 458.75 M197.30 458.75 Q193.84 459.55 191 461.95"/><path d="M209.30 292.95 Q205.84 292.15 203 289.75 M209.30 292.95 L203 292.95 M209.30 292.95 Q205.84 293.75 203 296.15"/><path d="M246.30 547.45 Q242.84 546.65 240 544.25 M246.30 547.45 L240 547.45 M246.30 547.45 Q242.84 548.25 240 550.6500000000001"/><path d="M670.30 68.85 Q666.84 68.05 664 65.64999999999999 M670.30 68.85 L664 68.85 M670.30 68.85 Q666.84 69.65 664 72.05"/><path d="M670.30 311.99999999999994 Q666.84 311.20 664 308.79999999999995 M670.30 311.99999999999994 L664 311.99999999999994 M670.30 311.99999999999994 Q666.84 312.80 664 315.19999999999993"/><path d="M957.70 68.85 Q961.16 68.05 964 65.64999999999999 M957.70 68.85 L964 68.85 M957.70 68.85 Q961.16 69.65 964 72.05"/></g><g fill="#4ab2ea"><circle cx="212.1" cy="193.34999999999997" r="1.7"/><circle cx="222.2" cy="135.3" r="1.7"/><circle cx="222.2" cy="168.9" r="1.7"/><circle cx="222.2" cy="202.5" r="1.7"/><circle cx="219" cy="281.2" r="1.7"/><circle cx="219" cy="314.6" r="1.7"/><circle cx="219" cy="347.1" r="1.7"/><circle cx="219" cy="381.6" r="1.7"/><circle cx="219" cy="448.6" r="1.7"/><circle cx="215.6" cy="292.95" r="1.7"/><circle cx="218.6" cy="325.8" r="1.7"/><circle cx="218.6" cy="359.2" r="1.7"/><circle cx="218.6" cy="392.7" r="1.7"/><circle cx="220.2" cy="415.4" r="2.0"/><circle cx="255" cy="418.2" r="1.7"/><circle cx="255" cy="451.5" r="1.7"/><circle cx="255" cy="485" r="1.7"/><circle cx="255" cy="518.2" r="1.7"/><circle cx="249.9" cy="547.45" r="1.7"/><circle cx="679.6" cy="60.8" r="1.7"/><circle cx="674" cy="64" r="1.7"/><circle cx="674" cy="97.5" r="1.7"/><circle cx="674" cy="131" r="1.7"/><circle cx="674" cy="164.6" r="1.7"/><circle cx="679.5" cy="194.8" r="1.7"/><circle cx="679.5" cy="228" r="1.7"/><circle cx="679.5" cy="261" r="1.7"/><circle cx="679.5" cy="294.8" r="1.7"/><circle cx="947.6" cy="62.8" r="1.7"/></g><g fill="#34414d" stroke="#6ca6d4" stroke-width="1.4"><circle cx="231.3" cy="118.74999999999999" r="2.6"/><circle cx="236.7" cy="271.75" r="2.6"/><circle cx="201.4" cy="402.9" r="2.6"/><circle cx="679.2" cy="44.050000000000004" r="2.6"/><circle cx="942" cy="44.050000000000004" r="2.6"/></g><g fill="none" stroke="#e6e6e6" stroke-width="1.15" stroke-linecap="butt"><path d="M208.20 184.40 L208.20 182.20 M208.20 184.40 L211.08 184.10 M208.20 184.40 L205.32 184.10 M208.20 184.40 L209.63 186.69 M208.20 184.40 L206.77 186.69 "/><path d="M208.20 209.30 L208.20 207.10 M208.20 209.30 L211.08 209.00 M208.20 209.30 L205.32 209.00 M208.20 209.30 L209.63 211.59 M208.20 209.30 L206.77 211.59 "/><path d="M196.60 449.10 L196.60 446.90 M196.60 449.10 L199.48 448.80 M196.60 449.10 L193.72 448.80 M196.60 449.10 L198.03 451.39 M196.60 449.10 L195.17 451.39 "/><path d="M208.20 283.80 L208.20 281.60 M208.20 283.80 L211.08 283.50 M208.20 283.80 L205.32 283.50 M208.20 283.80 L209.63 286.09 M208.20 283.80 L206.77 286.09 "/><path d="M245.10 538.50 L245.10 536.30 M245.10 538.50 L247.98 538.20 M245.10 538.50 L242.22 538.20 M245.10 538.50 L246.53 540.79 M245.10 538.50 L243.67 540.79 "/><path d="M669.50 59.40 L669.50 57.20 M669.50 59.40 L672.38 59.10 M669.50 59.40 L666.62 59.10 M669.50 59.40 L670.93 61.69 M669.50 59.40 L668.07 61.69 "/><path d="M669.50 302.30 L669.50 300.10 M669.50 302.30 L672.38 302.00 M669.50 302.30 L666.62 302.00 M669.50 302.30 L670.93 304.59 M669.50 302.30 L668.07 304.59 "/><path d="M957.80 59.60 L957.80 57.40 M957.80 59.60 L960.68 59.30 M957.80 59.60 L954.92 59.30 M957.80 59.60 L959.23 61.89 M957.80 59.60 L956.37 61.89 "/></g></svg><div class="lab" style="left:220.60px;top:106.00px">0..1</div><div class="lab" style="left:226.50px;top:258.80px">0..1</div><div class="lab" style="left:193.60px;top:390.00px">0..1</div><div class="lab" style="left:194.20px;top:403.10px">1</div><div class="lab" style="left:668.80px;top:30.70px">0..1</div><div class="lab" style="left:933.50px;top:30.80px">0..1</div></div></body></html>
